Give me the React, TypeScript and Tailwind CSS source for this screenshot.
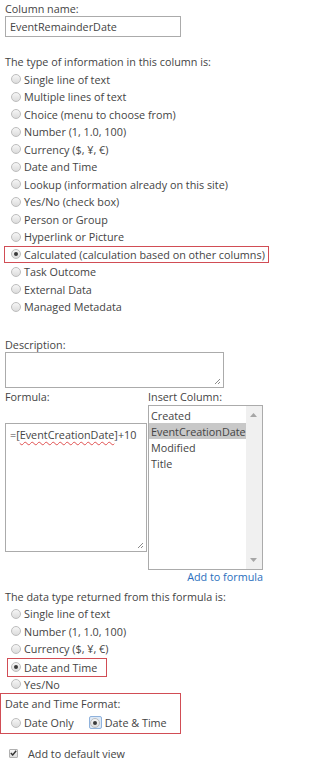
import React from "react";

const font = { fontFamily: '"Open Sans", "Noto Sans", "Liberation Sans", sans-serif' };

function Radio({ checked = false, focused = false }: { checked?: boolean; focused?: boolean }) {
  const circle = (
    <span className="flex h-[10px] w-[10px] items-center justify-center rounded-full border border-[#bdbdbd] bg-gradient-to-b from-[#f6f6f6] to-[#dcdcdc]">
      {checked && <span className="h-[4px] w-[4px] rounded-full bg-[#3a3a3a]" />}
    </span>
  );
  if (focused) {
    return (
      <span className="flex h-[13px] w-[13px] items-center justify-center rounded-[2px] border border-[#8fb2dc] bg-[#dde9f7]">
        {circle}
      </span>
    );
  }
  return circle;
}

function RadioRow({ label, checked = false }: { label: string; checked?: boolean }) {
  return (
    <div className="flex h-[17.5px] items-center pl-[6px]">
      <Radio checked={checked} />
      <span className="ml-[3px] whitespace-nowrap">{label}</span>
    </div>
  );
}

const types = [
  "Single line of text",
  "Multiple lines of text",
  "Choice (menu to choose from)",
  "Number (1, 1.0, 100)",
  "Currency ($, ¥, €)",
  "Date and Time",
  "Lookup (information already on this site)",
  "Yes/No (check box)",
  "Person or Group",
  "Hyperlink or Picture",
];

function Grip() {
  return (
    <svg className="absolute bottom-[2px] right-[2px]" width="7" height="7" viewBox="0 0 7 7">
      <path d="M6 1 L1 6 M6 4 L4 6" stroke="#8a8a8a" strokeWidth="1" />
    </svg>
  );
}

export default function App() {
  return (
    <div className="min-h-[768px] w-[333px] bg-white px-[5px] text-[10.8px] leading-[15px] text-[#444]" style={font}>
      <div className="h-[16px] pt-[1px] leading-[15px]">Column name:</div>
      <div className="flex h-[21px] w-[176px] items-center border border-[#ababab] pl-[4px] text-[#444]">
        EventRemainderDate
      </div>
      <div className="mt-[16px] flex h-[17.5px] items-center whitespace-nowrap">
        The type of information in this column is:
      </div>
      {types.map((t) => (
        <RadioRow key={t} label={t} />
      ))}
      <div className="-ml-[1px] flex h-[17.5px] w-[265px] items-center border border-[#d14d55] pl-[6px]">
        <Radio checked />
        <span className="ml-[3px] whitespace-nowrap">Calculated (calculation based on other columns)</span>
      </div>
      <RadioRow label="Task Outcome" />
      <RadioRow label="External Data" />
      <RadioRow label="Managed Metadata" />

      <div className="mt-[22.5px] h-[14px] leading-[14px]">Description:</div>
      <div className="relative h-[36px] w-[219px] border border-[#ababab]">
        <Grip />
      </div>

      <div className="mt-[2px] flex">
        <div className="w-[143px]">
          <div className="h-[14px] leading-[14px]">Formula:</div>
          <div className="relative mt-[19px] h-[129px] w-[142px] border border-[#ababab] pl-[4px] pt-[3px]">
            <span>
              =[
              <span className="underline decoration-[#e05050] decoration-wavy decoration-1 underline-offset-2">
                EventCreationDate
              </span>
              ]+10
            </span>
            <Grip />
          </div>
        </div>
        <div>
          <div className="h-[14px] leading-[14px]">Insert Column:</div>
          <div className="mt-[1px] flex h-[165px] w-[115px] border border-[#ababab]">
            <div className="flex-1 pt-[1px]">
              <div className="flex h-[16px] items-center pl-[2px]">Created</div>
              <div className="flex h-[16px] items-center bg-[#c8c8c8] pl-[2px] whitespace-nowrap">EventCreationDate</div>
              <div className="flex h-[16px] items-center pl-[2px]">Modified</div>
              <div className="flex h-[16px] items-center pl-[2px]">Title</div>
            </div>
            <div className="flex w-[17px] flex-col items-center justify-between bg-[#f0f0f0] py-[7px]">
              <svg width="7" height="4" viewBox="0 0 7 4">
                <path d="M0 4 L3.5 0 L7 4 Z" fill="#a6a6a6" />
              </svg>
              <svg width="7" height="4" viewBox="0 0 7 4">
                <path d="M0 0 L7 0 L3.5 4 Z" fill="#a6a6a6" />
              </svg>
            </div>
          </div>
        </div>
      </div>
      <div className="flex h-[14px] w-[258px] justify-end leading-[14px] text-[#2a6fbd]">Add to formula</div>

      <div className="mt-[3.5px] flex h-[17.5px] items-center whitespace-nowrap">
        The data type returned from this formula is:
      </div>
      <RadioRow label="Single line of text" />
      <RadioRow label="Number (1, 1.0, 100)" />
      <RadioRow label="Currency ($, ¥, €)" />
      <div className="ml-[2px] flex h-[19px] w-[100px] items-center border border-[#d14d55] pl-[3px]">
        <Radio checked />
        <span className="ml-[3px] whitespace-nowrap">Date and Time</span>
      </div>
      <div className="-mt-[1px]">
        <RadioRow label="Yes/No" />
      </div>
      <div className="-ml-[5px] h-[41px] w-[181px] border border-[#d14d55] pl-[4px] pt-[2px]">
        <div className="flex h-[15px] items-center">Date and Time Format:</div>
        <div className="mt-[3px] flex h-[17px] items-center pl-[6px]">
          <Radio />
          <span className="ml-[3px]">Date Only</span>
          <span className="ml-[15px]">
            <Radio checked focused />
          </span>
          <span className="ml-[3px]">Date &amp; Time</span>
        </div>
      </div>
      <div className="mt-[11px] flex h-[16px] items-center pl-[4px]">
        <span className="flex h-[9px] w-[9px] items-center justify-center rounded-[1px] border border-[#b0b0b0] bg-gradient-to-b from-[#f6f6f6] to-[#dedede]">
          <svg width="7" height="6" viewBox="0 0 7 6">
            <path d="M0.8 3 L2.7 5 L6.2 0.8" stroke="#333" strokeWidth="1.4" fill="none" />
          </svg>
        </span>
        <span className="ml-[10px]">Add to default view</span>
      </div>
    </div>
  );
}
